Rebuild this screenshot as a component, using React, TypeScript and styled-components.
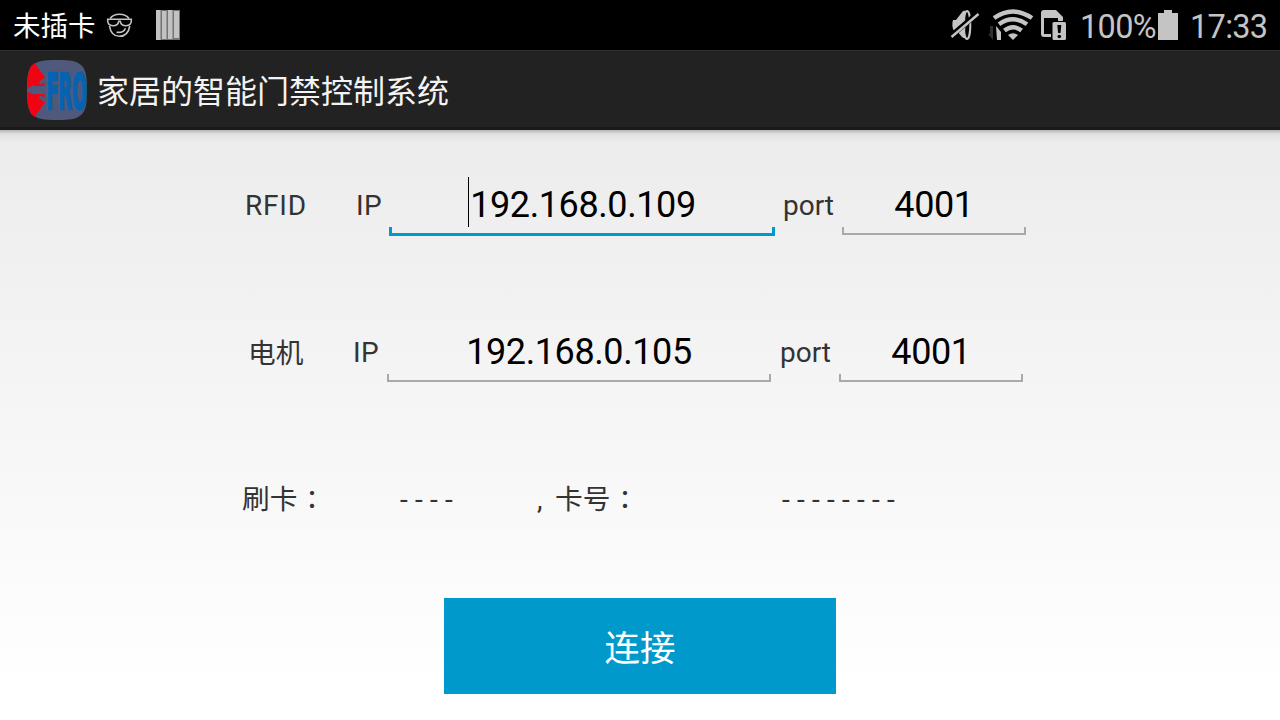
import React from "react";
import styled, { createGlobalStyle } from "styled-components";

const GlobalStyle = createGlobalStyle`
  * { box-sizing: border-box; }
  body { margin: 0; overflow: hidden; }
`;

const Screen = styled.div`
  display: flex;
  flex-direction: column;
  width: 1280px;
  height: 720px;
  font-family: Roboto, "Noto Sans CJK SC", sans-serif;
  white-space: nowrap;
`;

const StatusBar = styled.div`
  display: flex;
  justify-content: space-between;
  height: 50px;
  background: #000;
  color: #c4c4c4;
`;

const StatusGroup = styled.div`
  display: flex;
  height: 50px;
`;

const Notice = styled.span`
  width: 105px;
  padding-left: 13px;
  font-size: 27.5px;
  line-height: 53px;
  color: #fff;
`;

const Reading = styled.span<{ $width: number }>`
  width: ${(p) => p.$width}px;
  font-size: 32.5px;
  line-height: 55px;
  letter-spacing: -0.7px;
`;

const TitleBar = styled.header`
  display: flex;
  align-items: center;
  height: 80px;
  padding: 2px 0 0 26px;
  background: #222;
  border-top: 1px solid #303030;
  border-bottom: 3px solid #1a1a1a;
`;

const Title = styled.h1`
  margin: 3px 0 0 8px;
  font-size: 32px;
  line-height: 70px;
  font-weight: 400;
  color: #f3f3f3;
`;

const Content = styled.main`
  display: flex;
  flex-direction: column;
  height: 590px;
  background:
    linear-gradient(rgba(0, 0, 0, 0.24), rgba(0, 0, 0, 0.05) 4px, rgba(0, 0, 0, 0) 12px),
    linear-gradient(#ececec, #fff 95%);
`;

const Row = styled.div<{ $left: number }>`
  display: flex;
  height: 147px;
  padding: 46px 0 0 ${(p) => p.$left}px;
`;

const Label = styled.span<{ $width: number; $spacing?: number; $inset?: number }>`
  width: ${(p) => p.$width}px;
  padding-left: ${(p) => p.$inset ?? 0}px;
  font-size: 28px;
  line-height: 60px;
  letter-spacing: ${(p) => p.$spacing ?? 0}px;
  color: #333;
`;

const MotorLabel = styled(Label)`
  font-size: 27.7px;
  line-height: 62px;
`;

const CardLabel = styled(Label)`
  font-size: 27.7px;
  line-height: 57px;
`;

const Colon = styled.span`
  padding-left: 2px;
  font-family: "Noto Sans CJK TC", sans-serif;
  font-size: 25px;
  font-weight: 500;
`;

const Field = styled.div<{ $width: number; $focused?: boolean }>`
  display: flex;
  flex-direction: column;
  justify-content: flex-end;
  width: ${(p) => p.$width}px;
  height: ${(p) => (p.$focused ? 60 : 59)}px;
`;

const Value = styled.div`
  display: flex;
  justify-content: center;
  height: 50px;
  font-size: 36px;
  line-height: 56px;
  letter-spacing: -0.4px;
  color: #000;
`;

const Caret = styled.i`
  width: 1px;
  height: 50px;
  margin-right: 1px;
  background: #000;
`;

const Underline = styled.div<{ $focused?: boolean }>`
  height: ${(p) => (p.$focused ? 9 : 8)}px;
  border: ${(p) => (p.$focused ? "3px solid #0099cc" : "2px solid #a9a9a9")};
  border-top: 0;
`;

const Connect = styled.button`
  width: 392px;
  height: 96px;
  margin: 27px 0 0 444px;
  padding: 6px 0 0;
  border: 0;
  background: #0099cc;
  color: #fff;
  font: 400 35.5px/90px Roboto, "Noto Sans CJK SC", sans-serif;
`;

function StatusIcons() {
  return (
    <svg width="134" height="50" viewBox="946 0 134 50" fill="#c4c4c4">
      <path d="M953 20h3l7-9c2-1 3 0 3 3v21c0 3-2 4-4 2l-5-6h-3c-2-3-2-8-1-11z" />
      <ellipse cx="967" cy="25" rx="3.3" ry="14" fill="#000" stroke="#c4c4c4" strokeWidth="2" />
      <path d="M958 18l6-7q3 14 0 27l-6-6z" />
      <path d="M951 36L978 13" stroke="#000" strokeWidth="5.4" />
      <path d="M951.5 37L978.5 14" stroke="#c4c4c4" strokeWidth="2.4" />
      <path d="M990 26h3v14l-5-6h2z" fill="#303030" />
      <path d="M996 26l5 6v8h-4z" />
      <g fill="none" stroke="#c4c4c4" strokeWidth="4.4">
        <path d="M994 18Q1013 5 1032 18" />
        <path d="M999 24.2Q1013 14.5 1027 24.2" />
        <path d="M1004.4 30.6Q1013 24 1021.6 30.6" />
      </g>
      <path d="M1008 35q5-3.6 10 0l-5 5z" />
      <path fillRule="evenodd" d="M1044 10h12l7 7v20h-19q-3 0-3-3V13q0-3 3-3zM1044 18v16h14V18z" />
      <path d="M1051 21h16v20h-16z" fill="#000" />
      <rect x="1052.5" y="22" width="13.5" height="18" rx="1.5" />
      <path d="M1057.3 25h4l-.8 8h-2.4z" fill="#000" />
      <circle cx="1059.3" cy="36.5" r="1.8" fill="#000" />
    </svg>
  );
}

function NoticeIcons() {
  return (
    <svg width="80" height="50" viewBox="105 0 80 50">
      <g fill="none" stroke="#c4c4c4" strokeWidth="1.6">
        <path d="M110.2 18.5Q113 14.2 119.5 14.2T129 18.5M109.5 26Q111 36.3 119.5 36.3T129.8 26" />
        <path d="M107.7 19.2H131.3Q132 25.7 126 25.7 121 25.7 120.3 21.3H118.7Q118 25.7 113 25.7 107 25.7 107.7 19.2Z" />
        <path d="M116.5 32.2q7 1 9-4" />
      </g>
      <rect x="156" y="10" width="24" height="30" fill="#737373" />
      <path d="M156 10h4.5v30H156zM162 11h4.5v28H162zM168 10h4.5v29H168zM174 11h5v27h-5z" fill="#c2c2c2" />
    </svg>
  );
}

function Battery() {
  return (
    <svg width="32" height="50" viewBox="0 0 32 50">
      <path d="M6 10h8v3h6v27H0V13h6z" fill="#c4c4c4" />
    </svg>
  );
}

function Logo() {
  return (
    <svg width="63" height="72" viewBox="26 54 63 72">
      <path d="M57 60C71 60 77 61 81.500 65.500S87 77 87 90 86 110 81.500 114.500 71 120 57 120 37 119 32.500 114.500 27 104 27 90 28 70 32.500 65.500 43 60 57 60Z" fill="#4e597b" />
      <path d="M34.500 63L45 77.500 38.500 82 40.500 84.500 44.500 82.500V86H37L33 85.500 27.300 88.500Q27 73 31 66Z" fill="#f00412" />
      <path d="M34.500 117L45 102.500 38.500 98 40.500 95.500 44.500 97.500V94H37L33 94.500 27.300 91.500Q27 107 31 114Z" fill="#f00412" />
      <g transform="translate(46.500 109) scale(.385 1)">
        <text
          x="0"
          y="0"
          textLength="105"
          lengthAdjust="spacingAndGlyphs"
          fontFamily="DejaVu Sans, sans-serif"
          fontWeight="700"
          fontSize="50"
          fill="#0563b2"
          stroke="#0563b2"
          strokeWidth="2.4"
        >
          FRO
        </text>
      </g>
    </svg>
  );
}

function Input({ value, width, focused }: { value: string; width: number; focused?: boolean }) {
  return (
    <Field $width={width} $focused={focused}>
      <Value>
        {focused && <Caret />}
        {value}
      </Value>
      <Underline $focused={focused} />
    </Field>
  );
}

export default function App() {
  return (
    <Screen>
      <GlobalStyle />
      <StatusBar>
        <StatusGroup>
          <Notice>未插卡</Notice>
          <NoticeIcons />
        </StatusGroup>
        <StatusGroup>
          <StatusIcons />
          <Reading $width={78}>100%</Reading>
          <Battery />
          <Reading $width={90}>17:33</Reading>
        </StatusGroup>
      </StatusBar>
      <TitleBar>
        <Logo />
        <Title>家居的智能门禁控制系统</Title>
      </TitleBar>
      <Content>
        <Row $left={245}>
          <Label $width={111} $spacing={0.8}>RFID</Label>
          <Label $width={33} $spacing={0.3}>IP</Label>
          <Input value="192.168.0.109" width={386} focused />
          <Label $width={67} $inset={8}>port</Label>
          <Input value="4001" width={184} />
        </Row>
        <Row $left={248}>
          <MotorLabel $width={105}>电机</MotorLabel>
          <Label $width={34} $spacing={0.3}>IP</Label>
          <Input value="192.168.0.105" width={384} />
          <Label $width={68} $inset={9}>port</Label>
          <Input value="4001" width={184} />
        </Row>
        <Row $left={242}>
          <CardLabel $width={157}>刷卡<Colon>：</Colon></CardLabel>
          <Label $width={137} $inset={1} $spacing={0.15}>- - - -</Label>
          <Label $width={19} $inset={1}>,</Label>
          <CardLabel $width={226}>卡号<Colon>：</Colon></CardLabel>
          <Label $width={130} $inset={1} $spacing={0.15}>- - - - - - - -</Label>
        </Row>
        <Connect>连接</Connect>
      </Content>
    </Screen>
  );
}
